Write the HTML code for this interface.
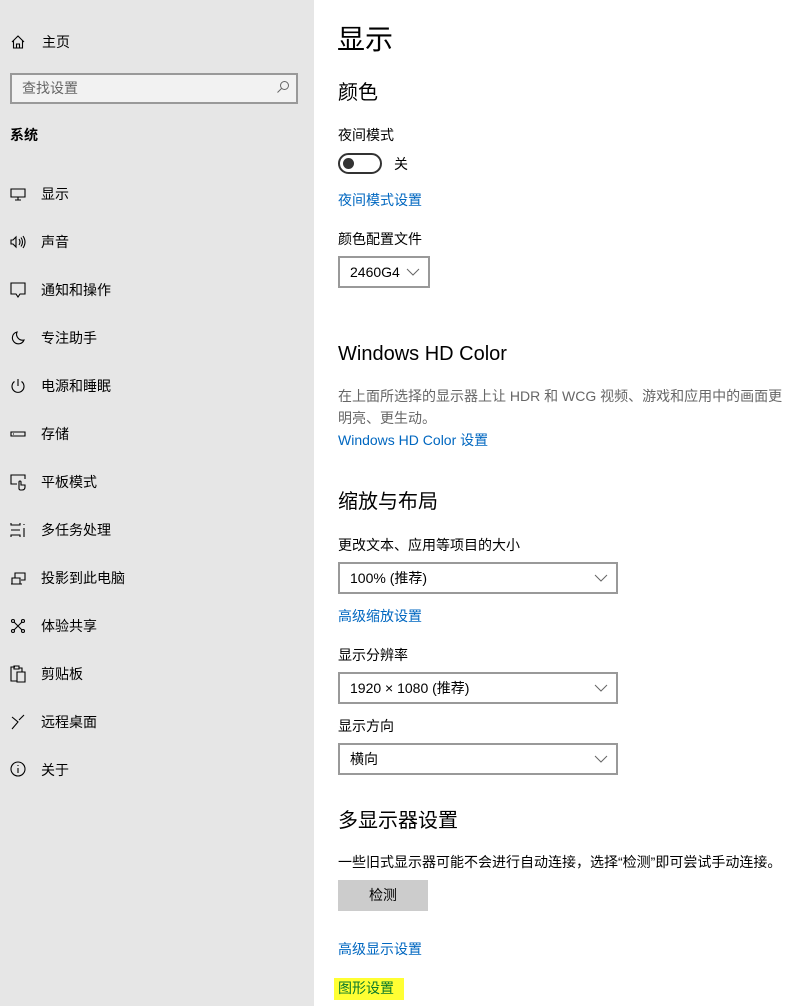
<!DOCTYPE html>
<html><head><meta charset="utf-8"><style>
*{margin:0;padding:0;box-sizing:border-box}
body{width:795px;height:1006px;overflow:hidden;background:#fff;font-family:"Liberation Sans","Noto Sans CJK SC",sans-serif;font-size:14px;color:#000;position:relative}
#side{position:absolute;left:0;top:0;width:314px;height:1006px;background:#e6e6e6}
.a{position:absolute;white-space:nowrap;line-height:20px;height:20px}
.lk{color:#0067c0}
.dd{position:absolute;border:2px solid #999;background:#fff;height:32px}
.dd span{position:absolute;left:10px;top:4px;line-height:20px}
.dd svg{position:absolute;right:8px;top:10px}
.ic{position:absolute;left:10px}
</style></head><body>
<div id="side">
<svg class="ic" style="top:34px" width="16" height="16" viewBox="0 0 16 16" fill="none" stroke="#000" stroke-width="1.1"><path d="M2 8 L8 2 L14 8 M3.5 6.5 V14 H12.5 V6.5 M6.5 14 V10 H9.5 V14"/></svg>
<div class="a" style="left:42px;top:32px">主页</div>
<div style="position:absolute;left:10px;top:73px;width:288px;height:31px;border:2px solid #999;background:#f2f2f2"></div>
<div class="a" style="left:22px;top:78px;color:#666">查找设置</div>
<svg style="position:absolute;left:276px;top:80px" width="14" height="14" viewBox="0 0 14 14" fill="none" stroke="#666" stroke-width="1"><circle cx="8.5" cy="5.5" r="4"/><path d="M5.5 8.5 L1.5 12.5"/></svg>
<div class="a" style="left:10px;top:125px;font-weight:bold">系统</div>

<svg class="ic" style="top:186px" width="16" height="16" viewBox="0 0 16 16" fill="none" stroke="#000" stroke-width="1.1"><path d="M1 3 H15 V11 H1 Z M8 11 V14 M5 14 H11"/></svg>
<div class="a" style="left:41px;top:184px">显示</div>
<svg class="ic" style="top:234px" width="16" height="16" viewBox="0 0 16 16" fill="none" stroke="#000" stroke-width="1.1"><path d="M1 6 H3 L6 3 V13 L3 10 H1 Z M9 5 Q11 8 9 11 M11 3.5 Q14 8 11 12.5 M13 2 Q17 8 13 14"/></svg>
<div class="a" style="left:41px;top:232px">声音</div>
<svg class="ic" style="top:281px" width="16" height="18" viewBox="0 0 16 18" fill="none" stroke="#000" stroke-width="1.1"><path d="M1 2 H15 V13 H10 L8 16 L6 13 H1 Z"/></svg>
<div class="a" style="left:41px;top:280px">通知和操作</div>
<svg class="ic" style="top:330px" width="16" height="16" viewBox="0 0 16 16" fill="none" stroke="#000" stroke-width="1.1"><path d="M7 2 A6 6 0 1 0 14 10 A6 6 0 0 1 7 2 Z"/></svg>
<div class="a" style="left:41px;top:328px">专注助手</div>
<svg class="ic" style="top:378px" width="16" height="16" viewBox="0 0 16 16" fill="none" stroke="#000" stroke-width="1.1"><path d="M8 1 V8 M4.5 3.5 A6 6 0 1 0 11.5 3.5"/></svg>
<div class="a" style="left:41px;top:376px">电源和睡眠</div>
<svg class="ic" style="top:426px" width="16" height="16" viewBox="0 0 16 16" fill="none" stroke="#000" stroke-width="1.1"><path d="M1 6 H15 V10 H1 Z"/><path d="M3 8 H4" /></svg>
<div class="a" style="left:41px;top:424px">存储</div>
<svg class="ic" style="top:473px" width="18" height="18" viewBox="0 0 18 18" fill="none" stroke="#000" stroke-width="1.1"><path d="M7 11 H1 V2 H15 V6 M9 16 V9 A1 1 0 0 1 11 9 V12 H15 V14 Q15 17 12 17 H10 Z"/></svg>
<div class="a" style="left:41px;top:472px">平板模式</div>
<svg class="ic" style="top:522px" width="16" height="16" viewBox="0 0 16 16" fill="none" stroke="#000" stroke-width="1.1"><path d="M1 1 V3 H10 V1 M1 15 V13 H10 V15 M1 8 H10 M14 2 V3 M14 6 V15"/></svg>
<div class="a" style="left:41px;top:520px">多任务处理</div>
<svg class="ic" style="top:570px" width="16" height="16" viewBox="0 0 16 16" fill="none" stroke="#000" stroke-width="1.1"><path d="M5 8 V3 H15 V10 H11 M1 14 H12 M2 14 V8 H10 V14"/></svg>
<div class="a" style="left:41px;top:568px">投影到此电脑</div>
<svg class="ic" style="top:618px" width="16" height="16" viewBox="0 0 16 16" fill="none" stroke="#000" stroke-width="1.1"><circle cx="3" cy="3" r="1.5"/><circle cx="13" cy="3" r="1.5"/><circle cx="3" cy="13" r="1.5"/><circle cx="13" cy="13" r="1.5"/><path d="M4 4 L12 12 M12 4 L4 12"/></svg>
<div class="a" style="left:41px;top:616px">体验共享</div>
<svg class="ic" style="top:665px" width="16" height="18" viewBox="0 0 16 18" fill="none" stroke="#000" stroke-width="1.1"><path d="M5 2 H1 V16 H7 M4 1 H9 V4 H4 Z M9 3 H12 V7 M7 7 H15 V17 H7 Z"/></svg>
<div class="a" style="left:41px;top:664px">剪贴板</div>
<svg class="ic" style="top:713px" width="16" height="18" viewBox="0 0 16 18" fill="none" stroke="#000" stroke-width="1.1"><path d="M2 4 L8 9 L2 16 M14 2 L9 7"/></svg>
<div class="a" style="left:41px;top:712px">远程桌面</div>
<svg class="ic" style="top:761px" width="16" height="16" viewBox="0 0 16 16" fill="none" stroke="#000" stroke-width="1.1"><circle cx="8" cy="8" r="7"/><path d="M8 7 V12 M8 4 V5"/></svg>
<div class="a" style="left:41px;top:760px">关于</div>
</div>

<div class="a" style="left:337px;top:22px;font-size:28px;line-height:36px;height:36px">显示</div>
<div class="a" style="left:338px;top:80px;font-size:20px;line-height:26px;height:26px">颜色</div>
<div class="a" style="left:338px;top:125px">夜间模式</div>
<div style="position:absolute;left:338px;top:153px;width:44px;height:21px;border:2px solid #333;border-radius:11px"></div>
<div style="position:absolute;left:343px;top:158px;width:11px;height:11px;border-radius:50%;background:#333"></div>
<div class="a" style="left:394px;top:154px">关</div>
<div class="a lk" style="left:338px;top:190px">夜间模式设置</div>
<div class="a" style="left:338px;top:229px">颜色配置文件</div>
<div class="dd" style="left:338px;top:256px;width:92px"><span>2460G4</span><svg width="14" height="8" viewBox="0 0 14 8" fill="none" stroke="#666"><path d="M1 1 L7 7 L13 1"/></svg></div>
<div class="a" style="left:338px;top:341px;font-size:20px;line-height:26px;height:26px">Windows HD Color</div>
<div class="a" style="left:338px;top:386px;color:#666">在上面所选择的显示器上让 HDR 和 WCG 视频、游戏和应用中的画面更</div>
<div class="a" style="left:338px;top:408px;color:#666">明亮、更生动。</div>
<div class="a lk" style="left:338px;top:430px">Windows HD Color 设置</div>
<div class="a" style="left:338px;top:489px;font-size:20px;line-height:26px;height:26px">缩放与布局</div>
<div class="a" style="left:338px;top:535px">更改文本、应用等项目的大小</div>
<div class="dd" style="left:338px;top:562px;width:280px"><span>100% (推荐)</span><svg width="14" height="8" viewBox="0 0 14 8" fill="none" stroke="#666"><path d="M1 1 L7 7 L13 1"/></svg></div>
<div class="a lk" style="left:338px;top:606px">高级缩放设置</div>
<div class="a" style="left:338px;top:645px">显示分辨率</div>
<div class="dd" style="left:338px;top:672px;width:280px"><span>1920 × 1080 (推荐)</span><svg width="14" height="8" viewBox="0 0 14 8" fill="none" stroke="#666"><path d="M1 1 L7 7 L13 1"/></svg></div>
<div class="a" style="left:338px;top:716px">显示方向</div>
<div class="dd" style="left:338px;top:743px;width:280px"><span>横向</span><svg width="14" height="8" viewBox="0 0 14 8" fill="none" stroke="#666"><path d="M1 1 L7 7 L13 1"/></svg></div>
<div class="a" style="left:338px;top:808px;font-size:20px;line-height:26px;height:26px">多显示器设置</div>
<div class="a" style="left:338px;top:852px">一些旧式显示器可能不会进行自动连接，选择“检测”即可尝试手动连接。</div>
<div style="position:absolute;left:338px;top:880px;width:90px;height:31px;background:#ccc;text-align:center;line-height:31px">检测</div>
<div class="a lk" style="left:338px;top:939px">高级显示设置</div>
<div style="position:absolute;left:334px;top:978px;width:70px;height:22px;background:#ffff33"></div>
<div class="a" style="left:338px;top:978px;color:#0a7a2a">图形设置</div>
</body></html>
